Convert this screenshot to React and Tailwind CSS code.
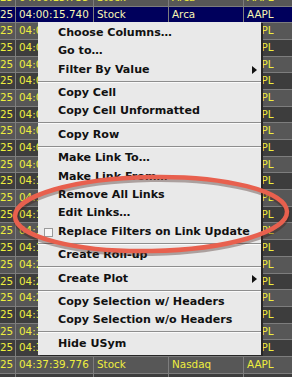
import React from 'react';

const rows = [
  { d: '25', t: '04:00:15.735', k: 'Stock', x: 'Arca', s: 'AAPL' },
  { d: '25', t: '04:00:15.740', k: 'Stock', x: 'Arca', s: 'AAPL', sel: true },
  { d: '25', t: '04:00:15.741', k: 'Stock', x: 'Arca', s: 'AAPL' },
  { d: '25', t: '04:00:15.760', k: 'Stock', x: 'Arca', s: 'AAPL' },
  { d: '25', t: '04:00:15.900', k: 'Stock', x: 'Arca', s: 'AAPL' },
  { d: '25', t: '04:00:16.103', k: 'Stock', x: 'Arca', s: 'AAPL' },
  { d: '25', t: '04:00:16.500', k: 'Stock', x: 'Arca', s: 'AAPL' },
  { d: '25', t: '04:00:17.220', k: 'Stock', x: 'Arca', s: 'AAPL' },
  { d: '25', t: '04:00:18.014', k: 'Stock', x: 'Arca', s: 'AAPL' },
  { d: '25', t: '04:00:21.377', k: 'Stock', x: 'Arca', s: 'AAPL' },
  { d: '25', t: '04:01:02.451', k: 'Stock', x: 'Arca', s: 'AAPL' },
  { d: '25', t: '04:12:40.118', k: 'Stock', x: 'Arca', s: 'AAPL' },
  { d: '25', t: '04:13:05.902', k: 'Stock', x: 'Arca', s: 'AAPL' },
  { d: '25', t: '04:15:33.260', k: 'Stock', x: 'Arca', s: 'AAPL' },
  { d: '25', t: '04:17:48.004', k: 'Stock', x: 'Arca', s: 'AAPL' },
  { d: '25', t: '04:19:12.771', k: 'Stock', x: 'Arca', s: 'AAPL' },
  { d: '25', t: '04:22:09.385', k: 'Stock', x: 'Arca', s: 'AAPL' },
  { d: '25', t: '04:25:51.640', k: 'Stock', x: 'Arca', s: 'AAPL' },
  { d: '25', t: '04:28:30.127', k: 'Stock', x: 'Arca', s: 'AAPL' },
  { d: '25', t: '04:31:14.558', k: 'Stock', x: 'Arca', s: 'AAPL' },
  { d: '25', t: '04:33:47.203', k: 'Stock', x: 'Arca', s: 'AAPL' },
  { d: '25', t: '04:35:02.919', k: 'Stock', x: 'Arca', s: 'AAPL' },
  { d: '25', t: '04:37:39.776', k: 'Stock', x: 'Nasdaq', s: 'AAPL' },
  { d: '25', t: '04:38:01.004', k: 'Stock', x: 'Nasdaq', s: 'AAPL' },
];

const menu = [
  { label: 'Choose Columns…' },
  { label: 'Go to…' },
  { label: 'Filter By Value', sub: true },
  'sep',
  { label: 'Copy Cell' },
  { label: 'Copy Cell Unformatted' },
  'sep',
  { label: 'Copy Row' },
  'sep',
  { label: 'Make Link To…' },
  { label: 'Make Link From…' },
  { label: 'Remove All Links' },
  { label: 'Edit Links…' },
  { label: 'Replace Filters on Link Update', check: true },
  'sep',
  { label: 'Create Roll-up' },
  'sep',
  { label: 'Create Plot', sub: true },
  'sep',
  { label: 'Copy Selection w/ Headers' },
  { label: 'Copy Selection w/o Headers' },
  'sep',
  { label: 'Hide USym' },
];

function Cell({ w, children, sel }) {
  return (
    <div
      className={`${w} shrink-0 h-full border-r border-b border-[#7d7d7d] pl-[3px] flex items-center overflow-hidden whitespace-nowrap ${sel ? 'text-[#f6f6b4]' : 'text-[#eeee3e]'}`}
    >
      {children}
    </div>
  );
}

export default function App() {
  return (
    <div className="relative w-[292px] h-[377px] overflow-hidden bg-[#444444] font-['DejaVu_Sans',sans-serif] text-[10.4px]">
      <div className="-mt-[10.2px]">
        {rows.map((r, i) => (
          <div
            key={i}
            className={`flex h-[16.7px] ${r.sel ? 'bg-[#00005c]' : i % 2 === 0 ? 'bg-[#575757]' : 'bg-[#3d3d3d]'}`}
          >
            <div className={`w-[16px] shrink-0 h-full border-r border-b border-[#7d7d7d] flex items-center overflow-hidden ${r.sel ? 'text-[#f6f6b4]' : 'text-[#eeee3e]'}`}>
              {r.d}
            </div>
            <Cell w="w-[78px]" sel={r.sel}>{r.t}</Cell>
            <Cell w="w-[75px]" sel={r.sel}>{r.k}</Cell>
            <Cell w="w-[75px]" sel={r.sel}>{r.x}</Cell>
            <Cell w="w-[60px]" sel={r.sel}>{r.s}</Cell>
          </div>
        ))}
      </div>

      {/* context menu */}
      <div className="absolute left-[38px] top-[22px] w-[223px] bg-[#e9e9e9] pt-[2px] pb-[2px] shadow-[2px_1px_0_#262626] font-['DejaVu_Sans',sans-serif] font-bold text-[11.1px] text-[#111]">
        {menu.map((m, i) =>
          m === 'sep' ? (
            <div key={i} className="h-[5px] flex flex-col justify-center">
              <div className="h-px bg-[#8e8e8e]" />
              <div className="h-px bg-[#fafafa]" />
            </div>
          ) : (
            <div key={i} className="relative h-[18.4px] flex items-center pl-[20px] whitespace-nowrap">
              {m.check && (
                <span className="absolute left-[6px] top-[5px] w-[9px] h-[9px] border border-[#9a9a9a] bg-[#f7f7f7]" />
              )}
              {m.label}
              {m.sub && (
                <svg className="absolute right-[4px] top-[5px]" width="5" height="8" viewBox="0 0 5 8">
                  <path d="M0 0 L5 4 L0 8 Z" fill="#111" />
                </svg>
              )}
            </div>
          )
        )}
      </div>

      {/* annotation */}
      <svg className="absolute inset-0 pointer-events-none" width="292" height="377">
        <ellipse cx="151" cy="215" rx="136" ry="37" fill="none" stroke="#3a1a14" strokeOpacity="0.35" strokeWidth="5" transform="rotate(-1 151 215) translate(0.5 1.5)" />
        <ellipse cx="151" cy="214" rx="136" ry="37" fill="none" stroke="#e8604e" strokeWidth="4.5" transform="rotate(-1 151 214)" />
      </svg>
    </div>
  );
}
